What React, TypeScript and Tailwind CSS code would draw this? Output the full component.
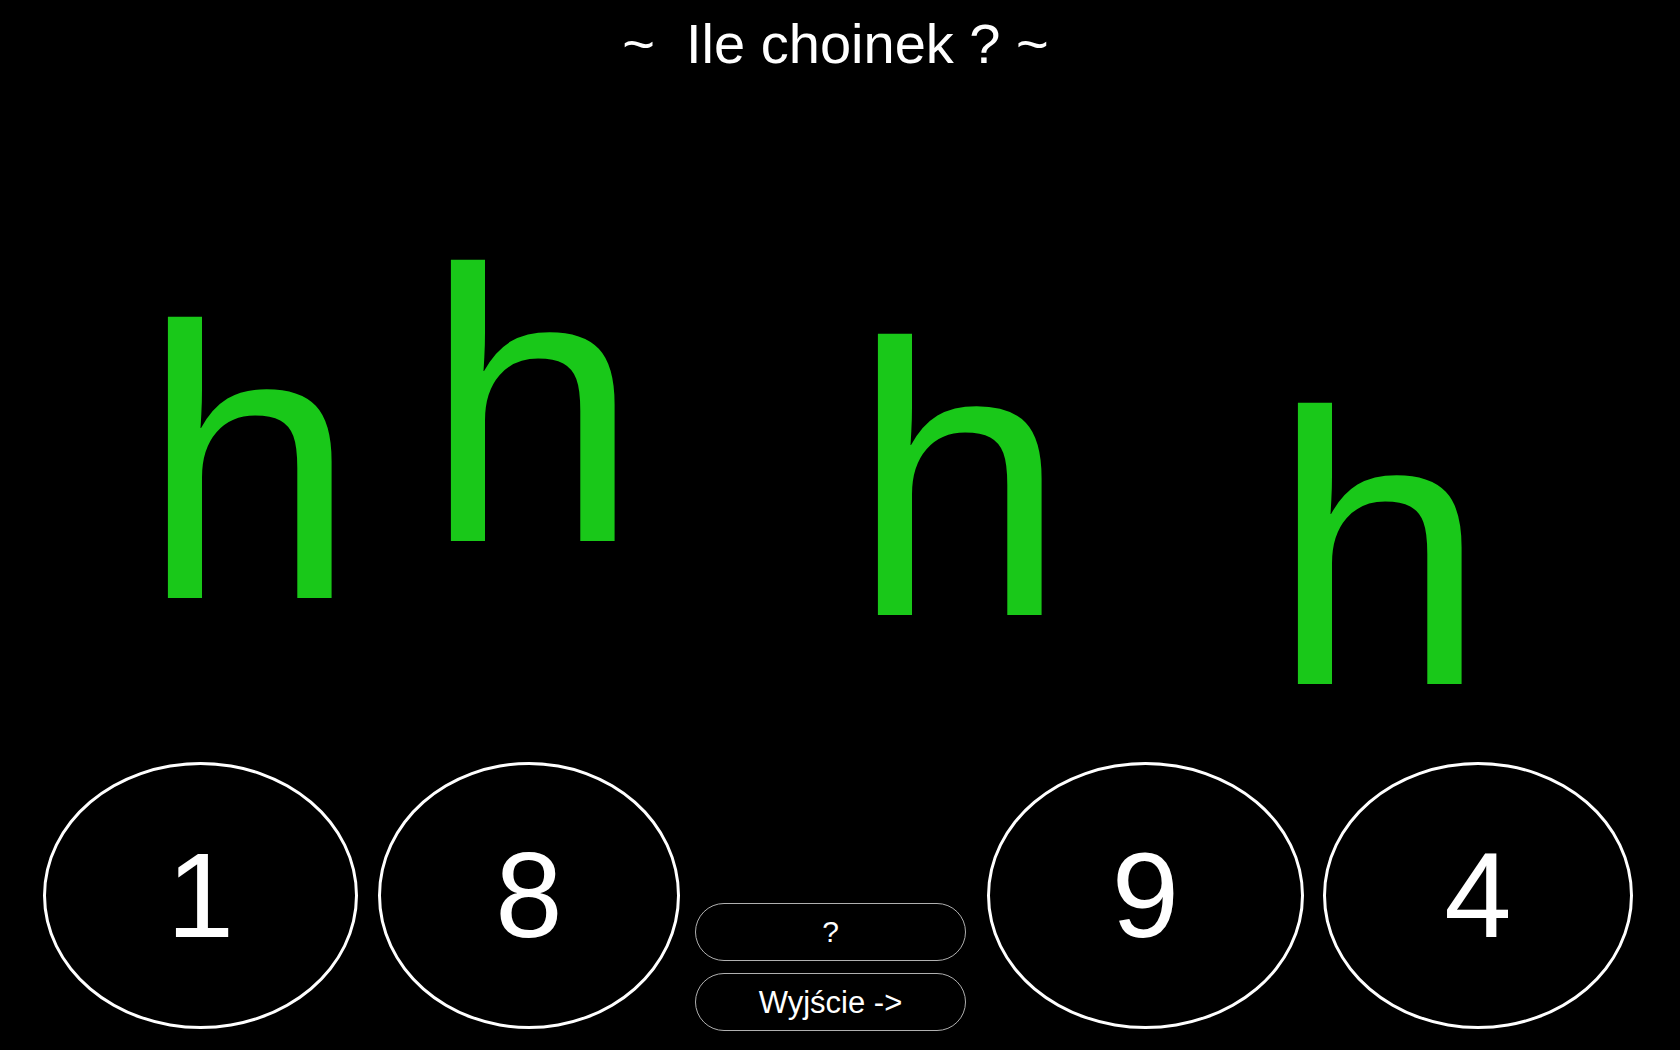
import React from "react";

const trees = [
  { left: 141, top: 270 },
  { left: 424, top: 213 },
  { left: 851, top: 287 },
  { left: 1271, top: 356 },
];

function Oval({ n, w, cls }: { n: string; w: string; cls?: string }) {
  return (
    <div
      className={`${w} h-[267px] shrink-0 rounded-[50%] border-[3px] border-white flex items-center justify-center text-white text-[121px] leading-none ${cls ?? ""}`}
    >
      {n}
    </div>
  );
}

export default function App() {
  return (
    <div
      className="relative w-[1680px] h-[1050px] bg-black overflow-hidden flex flex-col"
      style={{ fontFamily: '"Liberation Sans", Arial, sans-serif' }}
    >
      <div className="pt-[16px] pr-[9px] text-center text-white text-[56px] leading-none whitespace-pre">
        {"~  Ile choinek ? ~"}
      </div>

      {trees.map((t, i) => (
        <span
          key={i}
          className="absolute text-[#19c819] text-[388px] leading-none"
          style={{ left: t.left, top: t.top }}
        >
          h
        </span>
      ))}

      <div className="mt-auto mb-[19px] flex items-end pl-[43px]">
        <Oval n="1" w="w-[315px]" cls="mb-[2px]" />
        <Oval n="8" w="w-[302px]" cls="ml-[20px] mb-[2px]" />
        <div className="ml-[15px] flex flex-col gap-[12px] w-[271px] shrink-0">
          <button className="h-[58px] rounded-full border border-[#b0b0b0] text-white text-[30px] leading-none flex items-center justify-center">
            ?
          </button>
          <button className="h-[58px] rounded-full border border-[#b0b0b0] text-white text-[31px] leading-none flex items-center justify-center">
            Wyjście -&gt;
          </button>
        </div>
        <Oval n="9" w="w-[317px]" cls="ml-[21px] mb-[2px]" />
        <Oval n="4" w="w-[310px]" cls="ml-[19px] mb-[2px]" />
      </div>
    </div>
  );
}
